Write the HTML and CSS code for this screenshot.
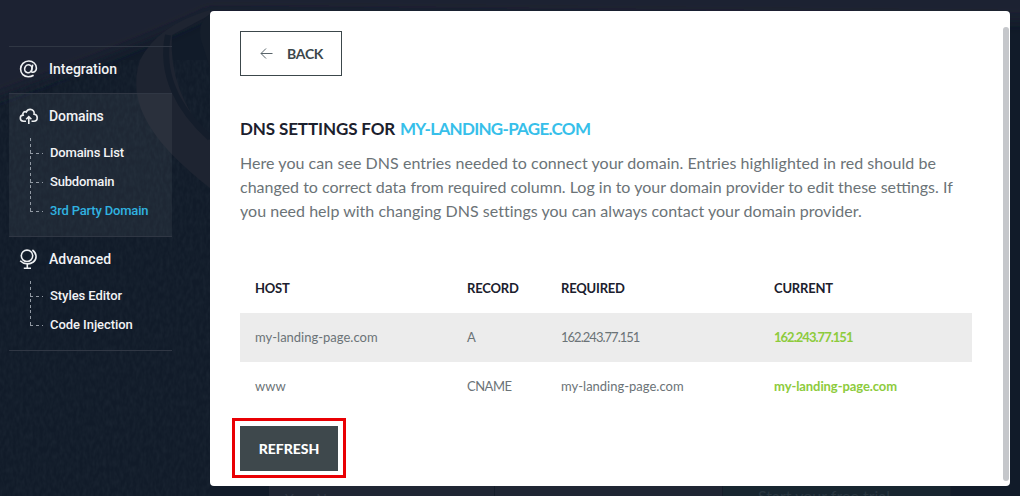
FILE: index.html
```html
<!DOCTYPE html>
<html lang="en">
<head>
<meta charset="utf-8">
<title>DNS settings</title>
<link rel="stylesheet" href="styles.css">
</head>
<body>
<svg class="backdrop" width="1020" height="496" viewBox="0 0 1020 496" aria-hidden="true">
  <defs>
    <filter id="soft" x="-20%" y="-20%" width="140%" height="140%"><feGaussianBlur stdDeviation="7"/></filter>
    <filter id="fabric" x="0" y="0" width="100%" height="100%">
      <feTurbulence type="fractalNoise" baseFrequency="0.3 0.15" numOctaves="2" seed="4"/>
      <feColorMatrix values="0 0 0 0 .15  0 0 0 0 .2  0 0 0 0 .23  .7 0 0 0 -.2"/>
    </filter>
  </defs>
  <rect width="1020" height="496" fill="#111b29"/>
  <rect y="60" width="210" height="436" filter="url(#fabric)" opacity=".2"/>
  <path d="M-20-20H1040V20L210 12Q150 40 75 68T-20 102Z" fill="#1e2431" filter="url(#soft)"/>
  <path d="M210 10Q158 25 140 60C125 105 155 145 210 188V140Q168 90 172 35L210 15Z" fill="#1e2431"/>
  <path d="M168 35C160 75 179 110 210 138" fill="none" stroke="#141d2b" stroke-width="6"/>
  <path d="M210 14Q197 22 201 40L210 68Z" fill="#151e2b"/>
</svg>
<div class="page">
  <nav class="sidebar">
    <section class="group">
      <a class="head"><svg class="icon" viewBox="0 0 20 20"><ellipse cx="9.3" cy="9.8" rx="3.6" ry="4" transform="rotate(20 9.3 9.8)"/><path d="M13.7 5.7 12.6 11.4Q12.3 13.5 14 13.3C16.2 12.8 17.4 10.8 17.4 9 17.4 5 14 2 9.8 2 5.1 2 1.6 5.6 1.6 10.1 1.6 14.8 5 17.7 9.2 17.7Q12.2 17.7 14.6 16.2"/></svg><span class="label">Integration</span></a>
    </section>
    <section class="group open">
      <a class="head"><svg class="icon" viewBox="0 0 20 20"><path d="M7 15.2H4.5C2.5 15.2 1.3 13.9 1.3 12.1 1.3 10.4 2.5 9.2 4.1 9.1 3.1 6.7 5.8 4.9 7.3 6 8.1 4.2 9.4 3.4 11.2 3.4 13.9 3.4 15.6 5.5 15.1 8.2 17.2 8.3 18.2 9.9 18.2 11.7 18.2 13.7 16.8 15.2 14.8 15.2H12.5"/><path d="M9.8 18V10.8M7.2 13.2 9.8 10.6 12.4 13.2"/></svg><span>Domains</span></a>
      <ul class="sub">
        <li><svg class="branch" width="13" height="29"><path d="M.5 0V29"/><path d="M0 15.5H13"/></svg><span>Domains List</span></li>
        <li><svg class="branch" width="13" height="29"><path d="M.5 0V29"/><path d="M0 15.5H13"/></svg><span>Subdomain</span></li>
        <li class="active"><svg class="branch" width="13" height="29"><path d="M.5 0V16"/><path d="M0 15.5H13"/></svg><span>3rd Party Domain</span></li>
      </ul>
    </section>
    <section class="group last">
      <a class="head"><svg class="icon" viewBox="0 0 20 20"><circle cx="8" cy="6.8" r="5.7"/><path d="M13.4 1C18.2 4.6 18 10.3 14.3 13 10.5 15.8 4.8 15.4 1.2 11.7M8.3 14.8V19M4.8 19.3H12"/></svg><span class="label">Advanced</span></a>
      <ul class="sub">
        <li><svg class="branch" width="13" height="29"><path d="M.5 0V29"/><path d="M0 15.5H13"/></svg><span class="label">Styles Editor</span></li>
        <li><svg class="branch" width="13" height="29"><path d="M.5 0V16"/><path d="M0 15.5H13"/></svg><span class="label">Code Injection</span></li>
      </ul>
    </section>
  </nav>
  <main class="panel">
    <a class="back"><svg width="13" height="12" viewBox="0 0 13 12"><path d="M12.5 5.5H1M6 .5 1 5.5 6 10.5"/></svg><span>BACK</span></a>
    <h1><span class="title">DNS SETTINGS FOR</span><span class="domain">MY-LANDING-PAGE.COM</span></h1>
    <p class="intro"><span class="wide">Here you can see DNS entries needed to connect your domain. Entries highlighted in red should be</span><br>changed to correct data from required column. Log in to your domain provider to edit these settings. If<br><span class="roomy">you need help with changing DNS settings you can always contact your domain provider.</span></p>
    <div class="table">
      <div class="row th"><span>HOST</span><span>RECORD</span><span>REQUIRED</span><span>CURRENT</span></div>
      <div class="row shade"><span>my-landing-page.com</span><span>A</span><span class="ip">162.243.77.151</span><span class="ok ip">162.243.77.151</span></div>
      <div class="row"><span>www</span><span class="cname">CNAME</span><span>my-landing-page.com</span><span class="ok">my-landing-page.com</span></div>
    </div>
    <div class="marked"><button class="refresh">REFRESH</button></div>
    <div class="scrollbar"></div>
  </main>
  <footer class="below"><div>Your Name</div><div></div><div class="trial">Start your free trial</div></footer>
</div>
</body>
</html>
```
FILE: styles.css
```css
* { box-sizing: border-box; }
body { margin: 0; width: 1020px; height: 496px; overflow: hidden; background: #111a29; font-family: Lato, "Liberation Sans", sans-serif; }
.backdrop { position: absolute; left: 0; top: 0; }
.page { position: relative; height: 496px; display: grid; grid-template-columns: 163px 800px; grid-template-rows: 475px 10px; column-gap: 38px; padding: 11px 10px 0 9px; }
.sidebar { padding-top: 35px; color: #f2f3f5; }
.group { border-top: 1px solid #303744; }
.open { background: rgba(255,255,255,.055); }
.open, .last { padding-bottom: 11px; }
.last { border-bottom: 1px solid #303744; }
.head { height: 44px; margin-bottom: 2px; display: flex; align-items: center; gap: 10px; padding-left: 10px; font: 500 14px Roboto, sans-serif; letter-spacing: -.1px; }
.open .head, .last .head { height: 44px; margin-bottom: 0; }
.head .label { letter-spacing: 0; }
.icon { width: 20px; height: 20px; overflow: visible; fill: none; stroke: #eef0f2; stroke-width: 1.6; }
.sub { list-style: none; margin: 0; padding: 0 0 0 21px; font: 500 13px/29px Roboto, sans-serif; letter-spacing: -.18px; }
.sub .label { letter-spacing: -.06px; }
.sub li { height: 29px; display: flex; gap: 7px; white-space: nowrap; }
.branch { fill: none; stroke: #929aa4; stroke-dasharray: 3 3; }
.active { color: #30b2e0; }
.panel { position: relative; background: #fff; border-radius: 4px; padding: 20px 38px 0 30px; display: flex; flex-direction: column; align-items: flex-start; }
.back { width: 102px; height: 45px; border: 1px solid #3c474b; display: flex; align-items: center; gap: 14px; padding-left: 19px; color: #3c474b; font: 700 14px Lato, sans-serif; letter-spacing: -.3px; }
.back svg { fill: none; stroke: #59646a; stroke-width: 1; }
h1 { margin: 41px 0 0; height: 24px; display: flex; font: 700 17px/24px Lato, sans-serif; color: #1b202d; white-space: nowrap; }
.title { width: 160px; letter-spacing: -.12px; }
.domain { color: #37bfea; letter-spacing: -.7px; }
.intro { margin: 10px 0 0; height: 72px; font-size: 16px; line-height: 24px; color: #6b7377; white-space: nowrap; }
.wide { letter-spacing: .05px; }
.roomy { letter-spacing: .02px; }
.table { margin-top: 40px; width: 732px; }
.row { height: 49px; display: grid; grid-template-columns: 212px 94px 213px 1fr; align-items: center; padding: 0 0 2px 15px; font-size: 13px; color: #6b7377; white-space: nowrap; }
.th { height: 50px; padding-bottom: 1px; font-weight: 700; letter-spacing: -.2px; color: #1b202d; }
.shade { background: #ececec; }
.ok { color: #8dcb3c; font-weight: 700; letter-spacing: -.08px; }
.ip { letter-spacing: -.98px; }
.cname { letter-spacing: -.5px; }
.marked { margin: 7px 0 0 -8px; width: 114px; height: 60px; border: 3px solid #e90004; padding: 5px; }
.refresh { width: 98px; height: 45px; border: 0; padding: 0; background: #3e484c; color: #fff; font: 900 14px Lato, sans-serif; letter-spacing: -.05px; }
.scrollbar { position: absolute; right: 1px; top: 16px; width: 6px; height: 454px; border-radius: 3px; background: #c5c7cb; }
.below { grid-column: 2; display: grid; grid-template-columns: 226px 228px 228px; padding-left: 59px; height: 10px; overflow: hidden; color: #303744; font-size: 14px; line-height: 26px; }
.below div { background: #1f2633; border-right: 1px solid #151e2a; padding-left: 16px; height: 10px; }
.below .trial { background: #182630; color: #293640; padding-left: 35px; font-size: 16px; line-height: 20px; }
```
